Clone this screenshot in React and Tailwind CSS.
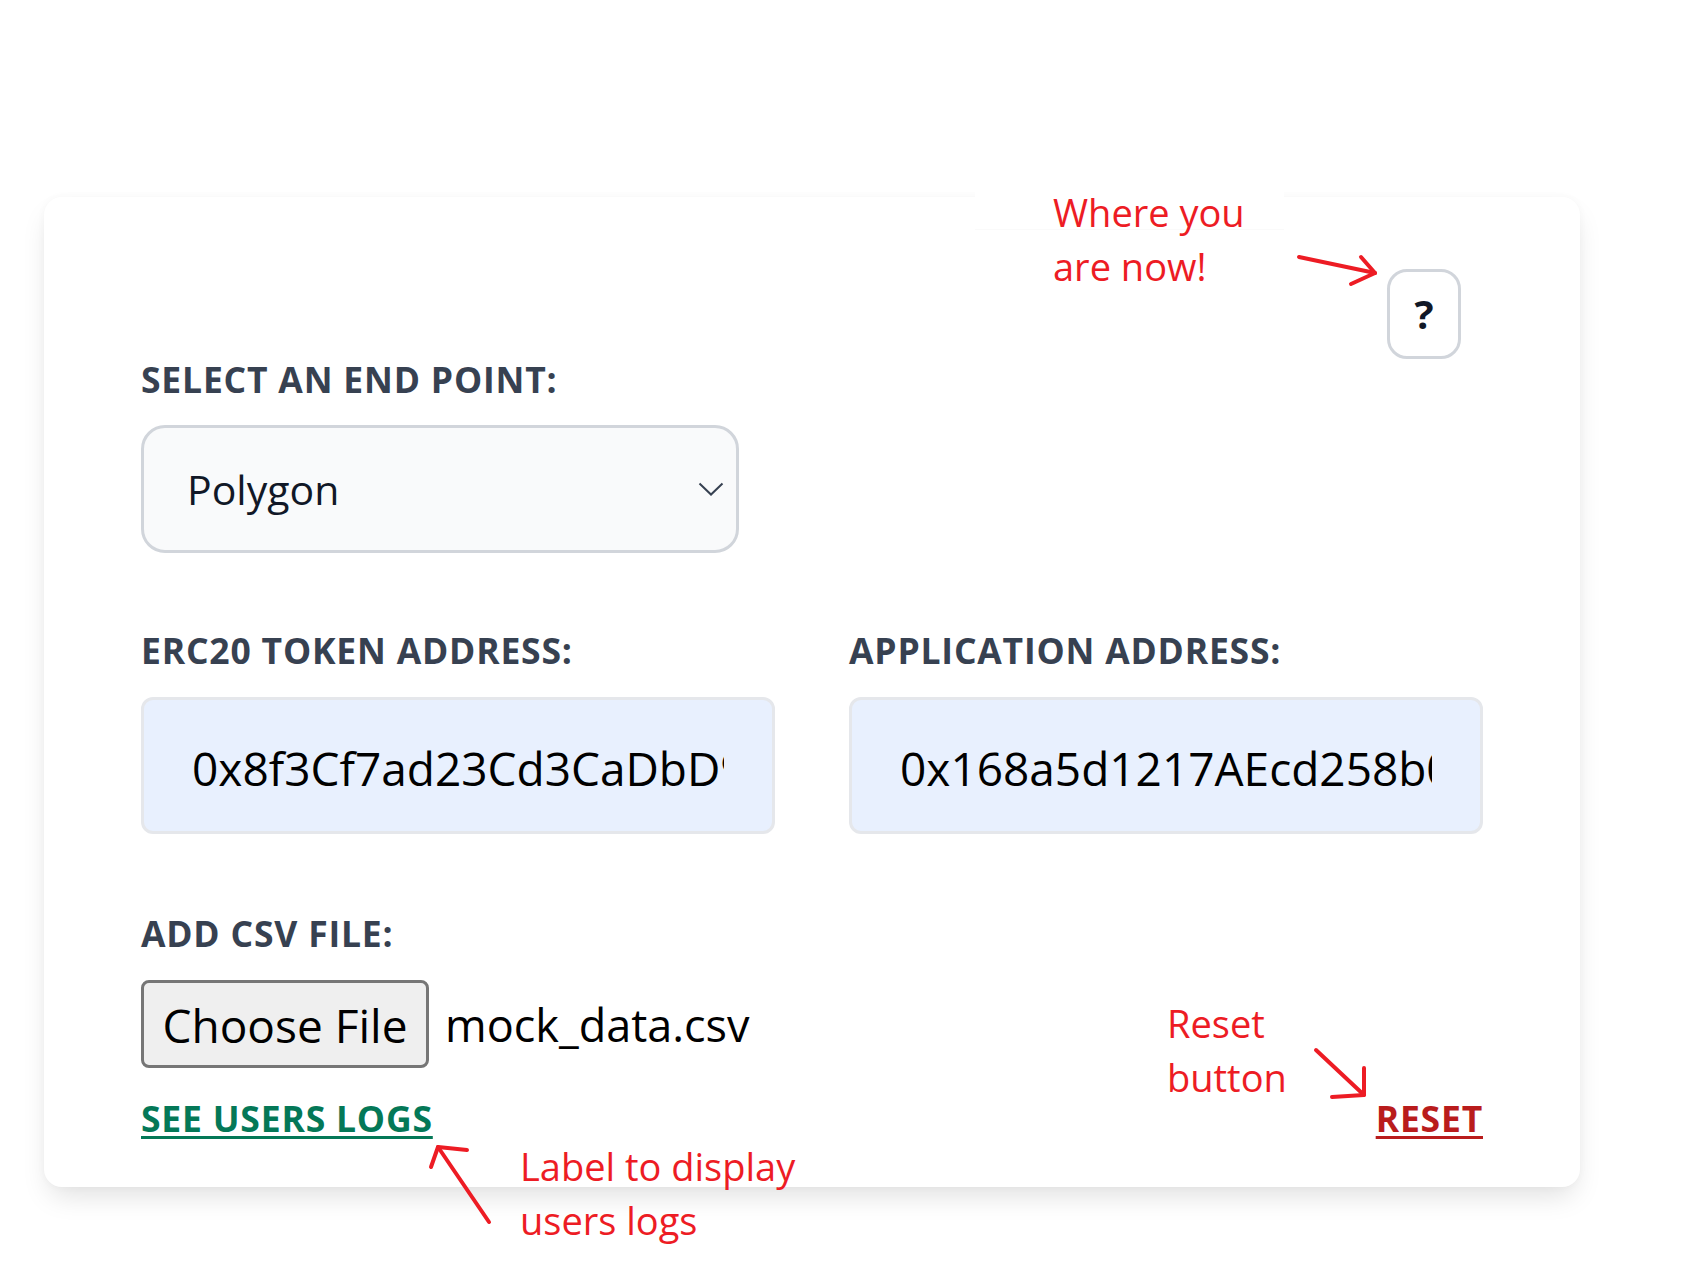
const font = { fontFamily: '"Open Sans", "Noto Sans", sans-serif' }

function Label({ children, className = '' }) {
  return (
    <div className={`text-[35.5px] leading-[36px] font-bold uppercase tracking-[0.8px] text-[#374151] ${className}`}>
      {children}
    </div>
  )
}

function AddressInput({ value }) {
  return (
    <input
      readOnly
      value={value}
      className="block w-full h-[137px] rounded-[12px] border-[3px] border-[#e5e7eb] bg-[#e8f0fe] pl-[48px] pr-[48px] pt-[4px] text-[46px] text-black outline-none"
    />
  )
}

function Annotations() {
  return (
    <div className="pointer-events-none absolute inset-0 text-[#ed1c24] text-[38px] leading-[54px]">
      {/* white paste box behind the top note */}
      <div className="absolute left-[975px] top-[184px] w-[309px] h-[46px] bg-white border-b border-[#fafafa]" />
      <div className="absolute left-[1053px] top-[185px]">
        Where you<br />are now!
      </div>
      <div className="absolute left-[520px] top-[1139px]">
        Label to display<br />users logs
      </div>
      <div className="absolute left-[1167px] top-[996px]">
        Reset<br />button
      </div>
      <svg className="absolute left-0 top-0" width="1699" height="1285" viewBox="0 0 1699 1285" fill="none">
        <g stroke="#ed1c24" strokeWidth="4" strokeLinecap="round" strokeLinejoin="round">
          <path d="M1299 257 L1375 273" />
          <path d="M1361 257 L1375 273 L1351 284" />
          <path d="M489 1222 L438 1147" />
          <path d="M431 1167 L438 1147 L467 1150" />
          <path d="M1316 1050 L1364 1095" />
          <path d="M1364 1068 L1364 1095 L1332 1097" />
        </g>
      </svg>
    </div>
  )
}

export default function App() {
  return (
    <div className="relative w-[1699px] h-[1285px] bg-white overflow-hidden" style={font}>
      <div className="pt-[197px] pl-[44px]">
        <div className="w-[1536px] rounded-[18px] bg-white px-[97px] pt-[72px] pb-[51px] shadow-[0_14px_28px_-6px_rgba(0,0,0,0.13),0_0_8px_rgba(0,0,0,0.03)]">
          {/* help */}
          <div className="flex justify-end pr-[22px]">
            <button className="w-[74px] h-[90px] rounded-[20px] border-[3px] border-[#d1d5db] bg-white flex items-center justify-center text-[40px] font-bold text-[#111827]">
              ?
            </button>
          </div>

          <Label className="mt-[2px]">Select an end point:</Label>
          <div className="relative mt-[28px] w-[598px]">
            <select
              defaultValue="polygon"
              className="block w-full h-[128px] appearance-none rounded-[24px] border-[3px] border-[#d1d5db] bg-[#f9fafb] pl-[43px] pt-[2px] text-[41px] font-normal text-[#111827] outline-none"
            >
              <option value="polygon">Polygon</option>
              <option value="ethereum">Ethereum</option>
            </select>
            <svg className="pointer-events-none absolute right-[15px] top-[57px]" width="26" height="14" viewBox="0 0 26 14" fill="none">
              <path d="M1.5 1.5 L13 12.5 L24.5 1.5" stroke="#374151" strokeWidth="2" />
            </svg>
          </div>

          <div className="grid grid-cols-2 gap-x-[74px] mt-[79px]">
            <div>
              <Label>ERC20 token address:</Label>
              <div className="mt-[29px]">
                <AddressInput value="0x8f3Cf7ad23Cd3CaDbD9735AFf958023239c6A063" />
              </div>
            </div>
            <div>
              <Label>Application address:</Label>
              <div className="mt-[29px]">
                <AddressInput value="0x168a5d1217AEcd258b03018d5bF1A1677A07b733" />
              </div>
            </div>
          </div>

          <Label className="mt-[81px]">Add CSV file:</Label>
          <div className="mt-[29px] flex items-center gap-[16px]">
            <button className="w-[288px] h-[88px] rounded-[8px] border-[3px] border-[#767676] bg-[#efefef] text-[46px] text-black flex items-center justify-center pt-[2px]">
              Choose File
            </button>
            <span className="text-[45px] text-black pt-[2px]">mock_data.csv</span>
          </div>

          <div className="mt-[32px] flex items-start justify-between">
            <a href="#" className="text-[35.5px] leading-[36px] font-bold uppercase tracking-[0.8px] text-[#047857] underline decoration-[3px] underline-offset-[4px]">
              See users logs
            </a>
            <button className="text-[35.5px] leading-[36px] font-bold uppercase tracking-[0.8px] text-[#b91c1c] underline decoration-[3px] underline-offset-[4px]">
              Reset
            </button>
          </div>
        </div>
      </div>
      <Annotations />
    </div>
  )
}
